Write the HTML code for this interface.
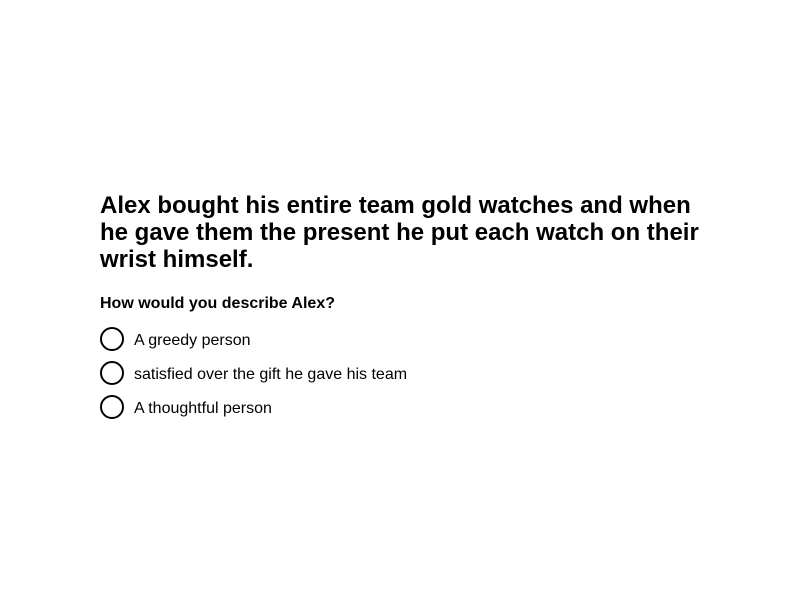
<!DOCTYPE html>
<html><head><style>
body{margin:0;width:800px;height:600px;background:#fff;font-family:"Liberation Sans",Arial,sans-serif;color:#000}
h1{position:absolute;left:100px;top:192px;width:610px;margin:0;font-size:24px;line-height:27px;font-weight:bold}
.q{position:absolute;left:100px;top:295px;font-size:16px;font-weight:bold;line-height:18px}
.o{position:absolute;left:100px;height:24px;display:flex;align-items:center;font-size:16px}
.o span{position:relative;top:2px}
.c{width:20px;height:20px;border:2px solid #000;border-radius:50%;margin-right:10px}
</style></head><body>
<h1>Alex bought his entire team gold watches and when he gave them the present he put each watch on their wrist himself.</h1>
<div class="q">How would you describe Alex?</div>
<div class="o" style="top:327px"><div class="c"></div><span>A greedy person</span></div>
<div class="o" style="top:361px"><div class="c"></div><span>satisfied over the gift he gave his team</span></div>
<div class="o" style="top:395px"><div class="c"></div><span>A thoughtful person</span></div>
</body></html>
